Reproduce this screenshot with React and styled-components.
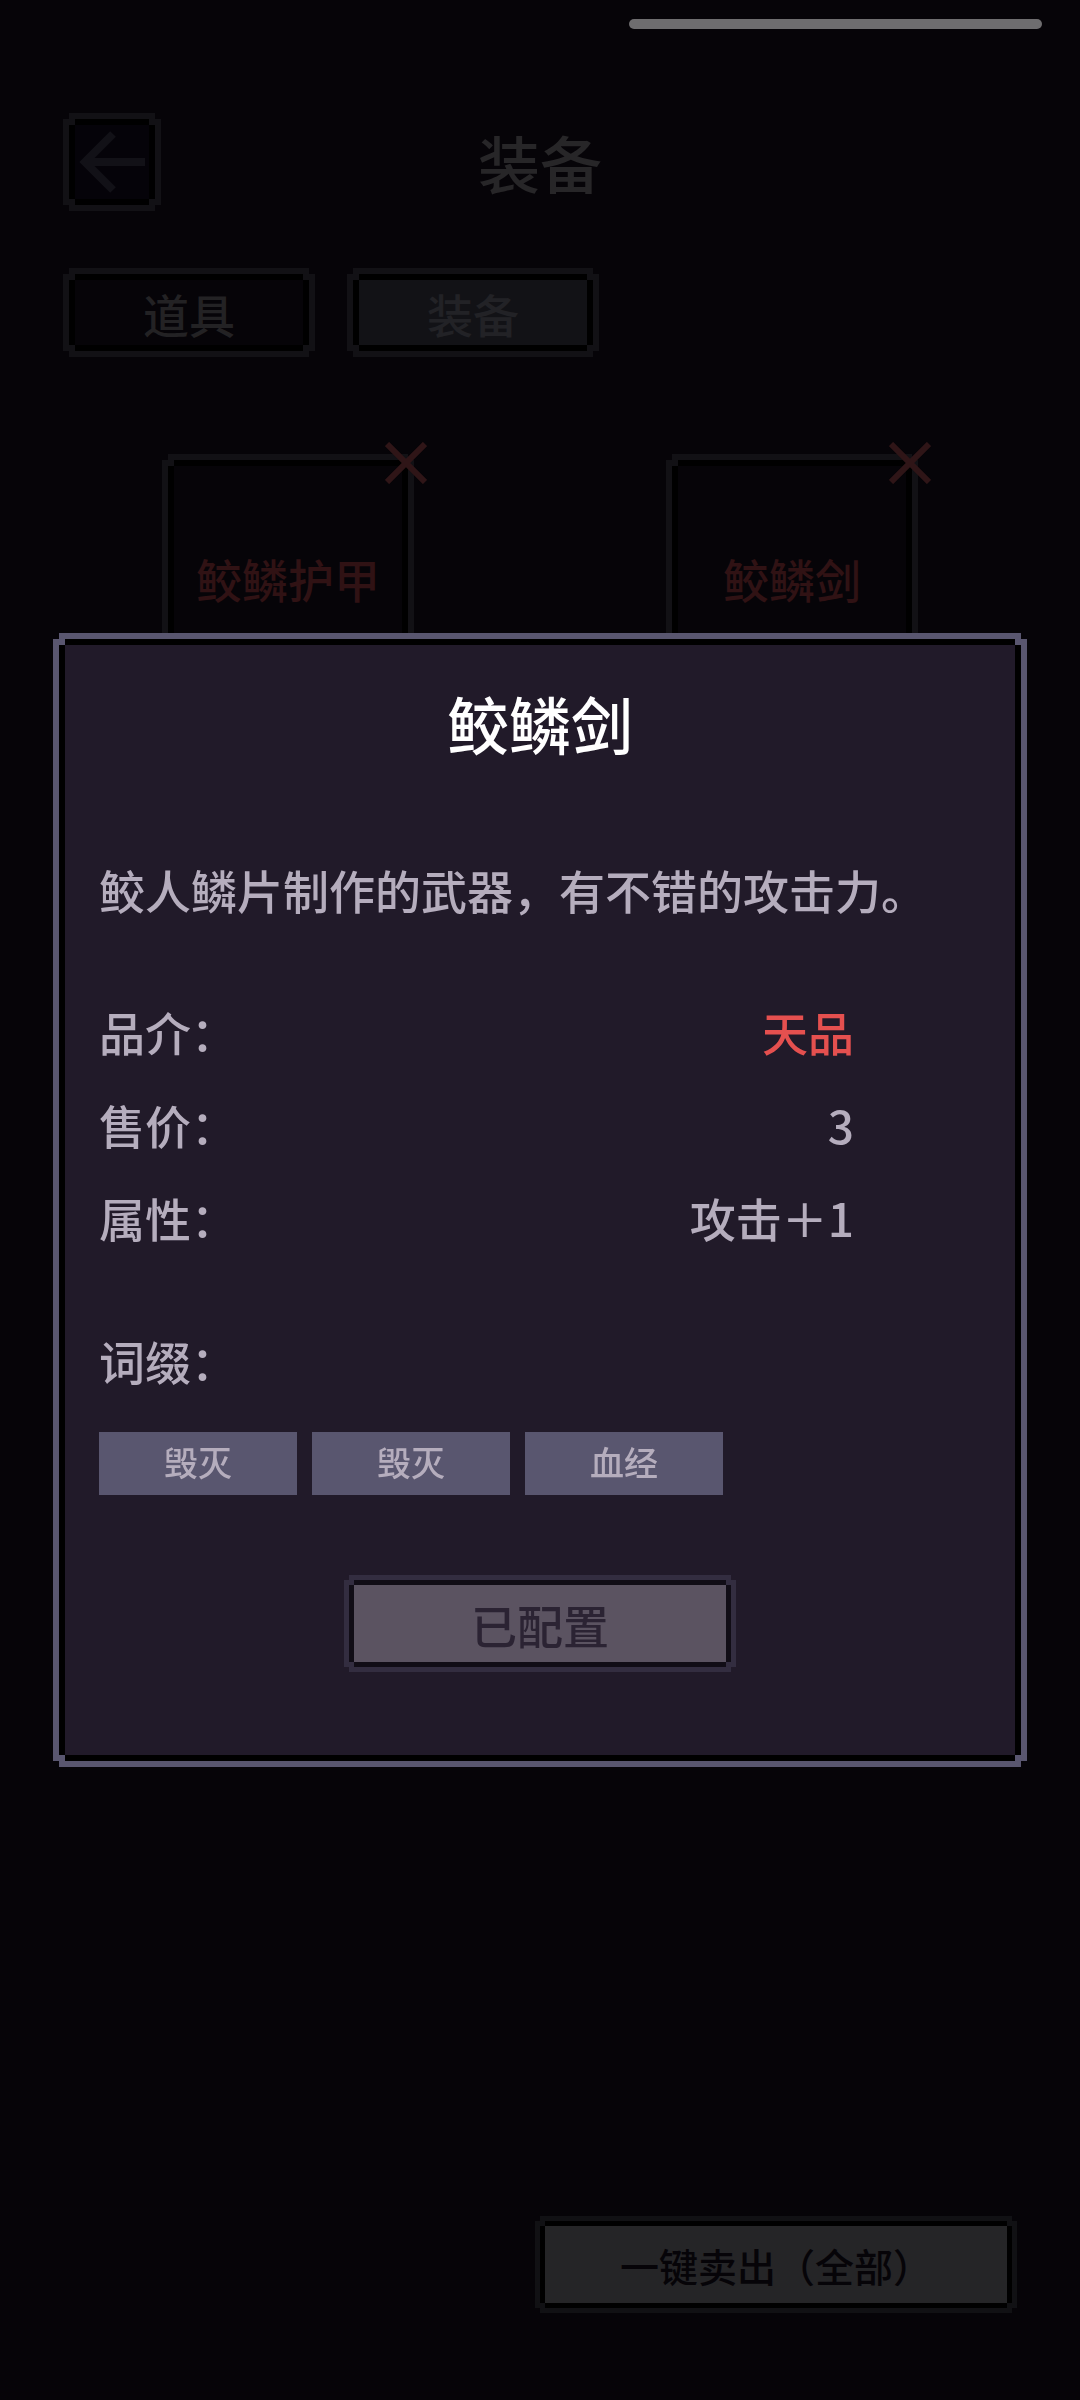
import React from "react";
import styled, { createGlobalStyle, css } from "styled-components";

const GlobalStyle = createGlobalStyle`
  * {
    box-sizing: border-box;
  }
  body {
    margin: 0;
    background: #060408;
    font-family: "Noto Sans CJK SC", sans-serif;
    font-weight: 500;
  }
  button {
    font-family: inherit;
    font-weight: inherit;
    cursor: pointer;
  }
  h1, h2, p, dl, dt, dd, ul {
    margin: 0;
    padding: 0;
    font-weight: inherit;
  }
`;

// Pixel frame: coloured rim with notched corners and a dark line inside it
const pixelFrame = (edge, rim, line, fill) => css`
  border: 0;
  margin: ${edge}px;
  background:
    linear-gradient(${rim}, ${rim}) left top / ${edge}px ${edge}px no-repeat,
    linear-gradient(${rim}, ${rim}) right top / ${edge}px ${edge}px no-repeat,
    linear-gradient(${rim}, ${rim}) left bottom / ${edge}px ${edge}px no-repeat,
    linear-gradient(${rim}, ${rim}) right bottom / ${edge}px ${edge}px no-repeat,
    linear-gradient(${fill}, ${fill}) center /
      calc(100% - ${edge * 2}px) calc(100% - ${edge * 2}px) no-repeat,
    ${line};
  box-shadow:
    0 -${edge}px 0 ${rim},
    0 ${edge}px 0 ${rim},
    -${edge}px 0 0 ${rim},
    ${edge}px 0 0 ${rim};
`;

const Page = styled.main`
  display: flex;
  flex-direction: column;
  min-height: 100vh;
  padding: 19px 36px 87px;
`;

const TopBar = styled.div`
  align-self: flex-end;
  width: 41%;
  height: 10px;
  margin-right: 2px;
  border-radius: 5px;
  background: #6e6d6f;
`;

const Header = styled.header`
  display: grid;
  grid-template-columns: 98px 1fr 98px;
  align-items: center;
  margin-top: 84px;
  padding: 0 27px;
`;

const BackButton = styled.button`
  ${pixelFrame(6, "#121115", "#000000", "#050309")}
  display: flex;
  align-items: center;
  justify-content: center;
  height: 86px;
  padding: 0;
  color: #121117;
`;

const PageTitle = styled.h1`
  font-size: 62px;
  line-height: 80px;
  text-align: center;
  color: #272628;
`;

const Tabs = styled.nav`
  display: flex;
  gap: 32px;
  margin-top: 57px;
  padding: 0 27px;
`;

const Tab = styled.button`
  ${(p) => pixelFrame(6, "#121115", "#000000", p.$active ? "#121216" : "#060408")}
  width: 240px;
  height: 77px;
  padding: 0;
  font-size: 46px;
  line-height: 60px;
  color: ${(p) => (p.$active ? "#222226" : "#232224")};
`;

const ItemGrid = styled.div`
  display: grid;
  grid-template-columns: 1fr 1fr;
  justify-items: center;
  margin-top: 97px;
`;

const ItemCard = styled.button`
  ${pixelFrame(6, "#121115", "#000000", "#060408")}
  position: relative;
  width: 240px;
  height: 240px;
  padding: 0 0 4px;
  font-size: 46px;
  line-height: 60px;
  color: #301214;
`;

const CrossMark = styled.svg`
  position: absolute;
  top: -18px;
  right: -19px;
  width: 42px;
  height: 42px;
  color: #2f1517;
`;

const SellButton = styled.button`
  ${pixelFrame(5, "#111114", "#000000", "#252527")}
  align-self: flex-end;
  margin-top: auto;
  margin-right: 32px;
  height: 87px;
  padding: 0 80px;
  font-size: 39px;
  line-height: 60px;
  color: #060408;
`;

const Overlay = styled.div`
  position: fixed;
  inset: 0;
  display: flex;
  align-items: center;
  padding: 0 53px;
`;

const Dialog = styled.section`
  ${pixelFrame(6, "#59566f", "#000000", "#211a29")}
  flex: 1;
  display: flex;
  flex-direction: column;
  padding: 44px 40px 89px;
  color: #b5adbd;
  font-size: 46px;
  line-height: 60px;
`;

const DialogTitle = styled.h2`
  font-size: 62px;
  line-height: 80px;
  text-align: center;
  color: #ffffff;
`;

const Description = styled.p`
  margin-top: 96px;
`;

const Stats = styled.dl`
  margin-top: 65px;
  padding-right: 127px;
`;

const StatRow = styled.div`
  display: flex;
  justify-content: space-between;
  align-items: center;
  height: 93px;
`;

const StatValue = styled.dd`
  color: ${(p) => (p.$rare ? "#e5504f" : "inherit")};
`;

const AffixLabel = styled.p`
  margin-top: 67px;
`;

const AffixList = styled.ul`
  display: flex;
  gap: 15px;
  margin-top: 42px;
  list-style: none;
`;

const Affix = styled.li`
  width: 198px;
  height: 63px;
  font-size: 34px;
  line-height: 60px;
  text-align: center;
  background: #59566f;
`;

const EquipButton = styled.button`
  ${pixelFrame(5, "#332d40", "#110d16", "#5b5361")}
  align-self: center;
  margin-top: 85px;
  width: 382px;
  height: 87px;
  padding: 0;
  font-size: 46px;
  line-height: 60px;
  color: #2b2333;
  cursor: default;
`;

const items = ["鲛鳞护甲", "鲛鳞剑"];

const stats = [
  { label: "品介：", value: "天品", rare: true },
  { label: "售价：", value: "3" },
  { label: "属性：", value: "攻击＋1" },
];

const affixes = ["毁灭", "毁灭", "血经"];

export default function App() {
  return (
    <>
      <GlobalStyle />
      <Page>
        <TopBar />
        <Header>
          <BackButton aria-label="返回">
            <svg width="66" height="62" viewBox="0 0 66 62" fill="none" stroke="currentColor" strokeWidth="8">
              <path d="M34 3L6 31L34 59M6 31H66" />
            </svg>
          </BackButton>
          <PageTitle>装备</PageTitle>
        </Header>
        <Tabs>
          <Tab>道具</Tab>
          <Tab $active>装备</Tab>
        </Tabs>
        <ItemGrid>
          {items.map((name) => (
            <ItemCard key={name}>
              {name}
              <CrossMark viewBox="0 0 42 42" fill="none" stroke="currentColor" strokeWidth="6">
                <path d="M2 2L40 40M40 2L2 40" />
              </CrossMark>
            </ItemCard>
          ))}
        </ItemGrid>
        <SellButton>一键卖出（全部）</SellButton>
      </Page>
      <Overlay>
        <Dialog role="dialog" aria-labelledby="item-name">
          <DialogTitle id="item-name">鲛鳞剑</DialogTitle>
          <Description>鲛人鳞片制作的武器，有不错的攻击力。</Description>
          <Stats>
            {stats.map((s) => (
              <StatRow key={s.label}>
                <dt>{s.label}</dt>
                <StatValue $rare={s.rare}>{s.value}</StatValue>
              </StatRow>
            ))}
          </Stats>
          <AffixLabel>词缀：</AffixLabel>
          <AffixList>
            {affixes.map((a, i) => (
              <Affix key={i}>{a}</Affix>
            ))}
          </AffixList>
          <EquipButton disabled>已配置</EquipButton>
        </Dialog>
      </Overlay>
    </>
  );
}
